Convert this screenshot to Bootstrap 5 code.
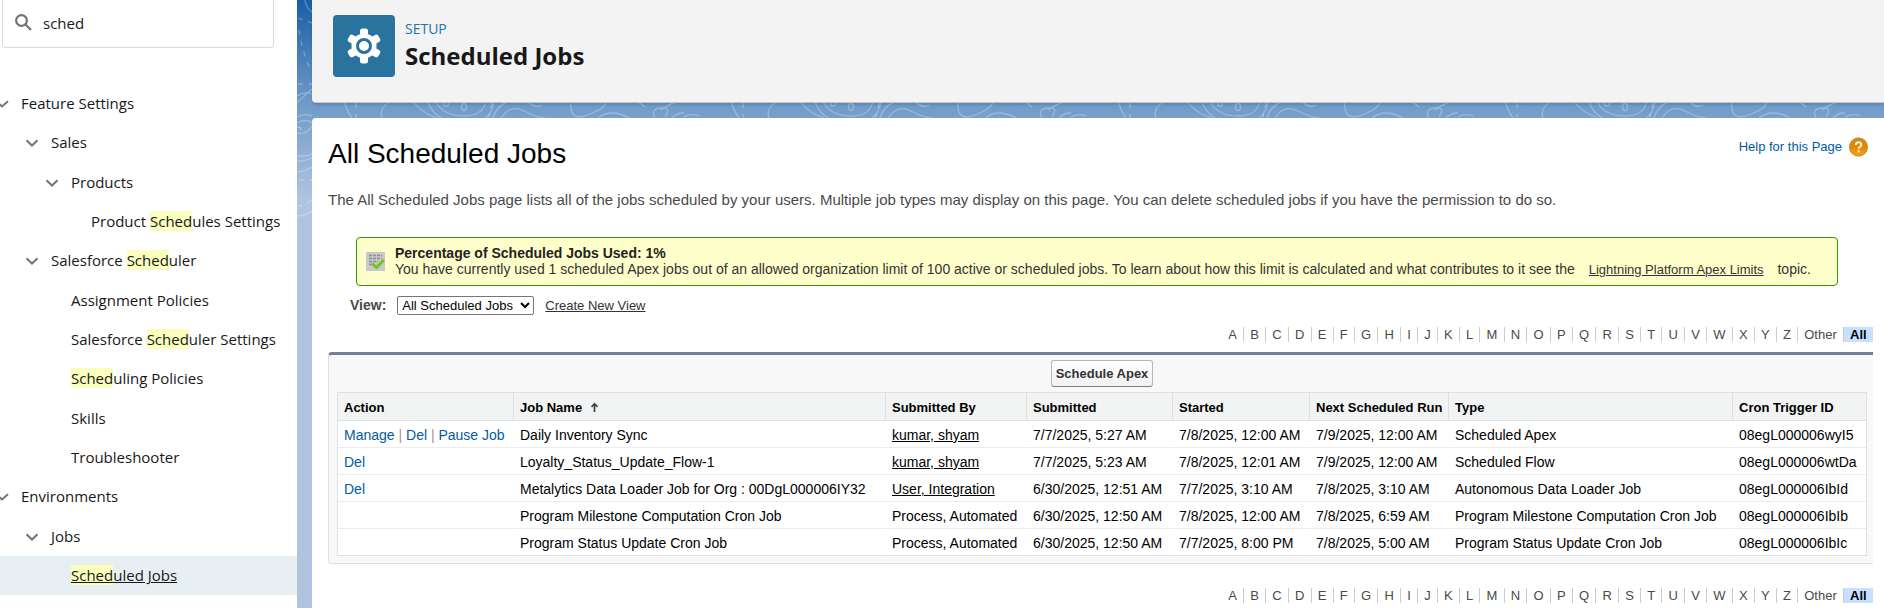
<!DOCTYPE html>
<html lang="en">
<head>
<meta charset="utf-8">
<meta name="viewport" content="width=device-width, initial-scale=1">
<title>Scheduled Jobs | Setup</title>
<link href="https://cdn.jsdelivr.net/npm/bootstrap@5.3.0/dist/css/bootstrap.min.css" rel="stylesheet">
<style>
  body { font-family: "Liberation Sans", Arial, sans-serif; font-size: 14px; color: #000; background: #fff; }
  a { color: #015ba7; text-decoration: none; }
  .plain-link { color: #333; text-decoration: underline; }
  .cell-link { color: #000; text-decoration: underline; }

  /* Setup tree */
  .setup-nav { width: 297px; font-family: "Open Sans", "Segoe UI", sans-serif; font-size: 15px; color: #181818; }
  .quick-find { height: 48px; margin: 0 23px 0 2px; border: 1px solid #dddbda; border-top: 0; border-radius: 0 0 4px 4px; padding: 0 0 2px 12px; gap: 11px; }
  .quick-find input { font-size: 15px; line-height: 20px; color: #181818; outline: 0; }
  .tree { margin-top: 36px; }
  .tree-row { height: 39px; gap: 12px; }
  .tree-row:nth-child(3n) { margin-top: 1px; }
  .tree-row a { color: #181818; white-space: nowrap; }
  .tree-row.current { background: #e8eff3; }
  .tree-row.current a { text-decoration: underline; }
  .tree-row .hit { background: #faffbd; color: inherit; padding: 0; }
  .tree-row svg { width: 14px; height: 8px; flex: none; }
  .lvl-0 { padding-left: 0; }
  .lvl-0 svg { width: 9px; }
  .lvl-1 { padding-left: 25px; }
  .lvl-2 { padding-left: 45px; }
  .lvl-leaf { padding-left: 71px; }
  .lvl-leaf-deep { padding-left: 91px; }

  /* Page backdrop */
  .backdrop {
    padding-left: 15px; gap: 15px; overflow: hidden;
    background:
      url("data:image/svg+xml,%3Csvg xmlns='http://www.w3.org/2000/svg' width='387' height='240' fill='none' stroke='%23fff' stroke-opacity='.28' stroke-width='1.3'%3E%3Cpath d='M8 0q1 8 7 12M0 96q7-5 15-2M0 103q6-6 15-14M0 117q8-4 15-1M0 123q10-5 15 0M0 127q6 0 3 3M0 133q10 2 15-7M0 156q8 1 15-2M0 161q10 0 15-3M0 172q10-1 15-5M0 216q8 0 15-5'/%3E%3Cpath stroke-dasharray='5 6' d='M1 18l14 5M2 30q4 26 13 42M1 84h14M59 103v15M195 103l-3 14M2 180h13M0 206q9 0 15-7'/%3E%3Cpath d='M47 100q2 10 8 18M85 118q-4-12 12-18M115 100q8 12 25 18M139 102q8 14 28 14t22-16M131 102q8 21 35 22t31-22M196 118q4-14 20-18M204 118q9-14 23-7t21 7M230 101q9 8 15 4M274 102q-2 20 17 13t18-15M301 118q13-10 31 0M335 101q7 0 13 6M358 118q-5-9 6-10t4 9M364 110q16-12 31-8M375 118q10-10 22 0'/%3E%3Cellipse cx='167' cy='107' rx='2.5' ry='3.5'/%3E%3Cellipse cx='149' cy='104' rx='2.5' ry='2'/%3E%3C/svg%3E") 0 0 repeat-x,
      linear-gradient(#195fa5 0, #6c98c7 100px, #80a6d0 130px, #b0c4df 200px) #b0c4df;
  }
  .page-head { height: 103px; background: #f3f3f3; border-bottom: 1px solid #c4c6ca; border-radius: 0 0 0 4px; padding: 15px 21px; gap: 10px; box-shadow: 0 2px 2px rgba(0,0,0,.12); font-family: "Open Sans", "Segoe UI", sans-serif; }
  .page-icon { width: 62px; height: 62px; background: #2a739e; border-radius: 4px; flex: none; }
  .eyebrow { font-size: 14px; line-height: 20px; color: #2574a9; margin-top: 4px; }
  .page-title { font-size: 24px; line-height: 32px; font-weight: 700; color: #181818; margin: 1px 0 0; }
  .page-body { background: #fff; border-radius: 4px 0 0 0; padding: 18px 11px 5px 16px; }
  .list-title { font-size: 28px; line-height: 36px; font-weight: 400; margin: 0; }
  .help-link { font-size: 13px; gap: 7px; margin: 1px 5px 0 0; }
  .list-desc { font-size: 15px; line-height: 20px; color: #4a4a4a; margin: 18px 0 27px; }

  /* Usage notice */
  .usage { min-height: 49px; margin: 0 35px 0 28px; padding: 0 8px 0 9px; gap: 10px; background: #ffffcc; border: 1px solid #390; border-radius: 4px; color: #333; line-height: 16px; }
  .usage strong { color: #222; }
  .usage .plain-link { font-size: 13px; margin: 0 10px; }

  .view-row { margin: 10px 0 12px 22px; height: 19px; gap: 11px; color: #4a4a4a; font-size: 13px; }
  .view-row label { font-weight: 700; font-size: 14px; }
  .view-select { width: 137px; height: 19px; font-size: 13px; padding: 0; color: #000; background: #fff; border: 1px solid #767676; border-radius: 2px; }

  .rolodex { width: 651px; font-size: 13px; line-height: 15px; }
  .rolodex li { flex: 1 1 auto; text-align: center; border-left: 1px solid #ccc; }
  .rolodex li:first-child { border-left: 0; }
  .rolodex a { display: block; padding: 0 5px; color: #4a4a4a; }
  .rolodex .on a { background: #c7e0ff; color: #000; font-weight: 700; }

  /* Job list */
  .job-block { margin: 10px 0 24px; padding: 0 6px 7px 8px; background: #f8f8f8; border: 1px solid #dde1e4; border-top: 3px solid #747e96; border-right: 0; border-radius: 4px 0 0 4px; }
  .btn-row { padding: 5px 0; }
  .btn-row button { height: 27px; padding: 0 4px; font-size: 13px; font-weight: 700; line-height: 16px; color: #333; border: 1px solid #b5b5b5; border-bottom-color: #7f7f7f; border-radius: 3px; background: linear-gradient(#fff, #f1f1f1); }
  .jobs { table-layout: fixed; width: 100%; border-collapse: separate; border-spacing: 0; border: 1px solid #dde1e4; border-bottom: 0; background: #fff; white-space: nowrap; }
  .jobs th { height: 28px; padding: 2px 6px 0; font-size: 13px; font-weight: 700; background: #f2f3f3; border-bottom: 1px solid #dde1e4; border-left: 1px solid #dde1e4; line-height: 20px; }
  .jobs td { height: 27px; padding: 2px 6px 0; border-bottom: 1px solid #ececec; border-left: 1px solid transparent; line-height: 20px; }
  .jobs tr:last-child td { border-bottom-color: #dde1e4; }
  .jobs th:first-child, .jobs td:first-child { border-left: 0; }
  .jobs .bar { color: #999; }
  .c-act { width: 175px; } .c-by { width: 141px; } .c-sub { width: 146px; } .c-start { width: 137px; }
  .c-next { width: 139px; } .c-type { width: 284px; } .c-id { width: 134px; }
</style>
</head>
<body>
<svg class="d-none" aria-hidden="true">
  <symbol id="chev" viewBox="0 0 14 8"><path d="M1.5 1.2 7 6.5l5.500-5.300" fill="none" stroke="#747474" stroke-width="2"/></symbol>
  <symbol id="chev-cut" viewBox="0 0 9 8"><path d="M-3.500 1.200 2 6.500l6-5.300" fill="none" stroke="#747474" stroke-width="2"/></symbol>
</svg>
<div class="d-flex min-vh-100">
  <aside class="setup-nav flex-shrink-0">
    <div class="quick-find d-flex align-items-center">
      <svg width="17" height="17" viewBox="0 0 17 17" fill="none" stroke="#747474" stroke-width="2.200" aria-hidden="true"><circle cx="6.500" cy="6.500" r="5.400"/><path d="m10.500 10.500 5.500 5.500"/></svg>
      <input type="text" class="border-0 p-0 w-75 bg-transparent" value="sched" aria-label="Quick Find">
    </div>
    <nav class="tree" aria-label="Setup">
      <div class="tree-row lvl-0 d-flex align-items-center"><svg><use href="#chev-cut"/></svg><a href="#">Feature Settings</a></div>
      <div class="tree-row lvl-1 d-flex align-items-center"><svg><use href="#chev"/></svg><a href="#">Sales</a></div>
      <div class="tree-row lvl-2 d-flex align-items-center"><svg><use href="#chev"/></svg><a href="#">Products</a></div>
      <div class="tree-row lvl-leaf-deep d-flex align-items-center"><a href="#">Product <mark class="hit">Sched</mark>ules Settings</a></div>
      <div class="tree-row lvl-1 d-flex align-items-center"><svg><use href="#chev"/></svg><a href="#">Salesforce <mark class="hit">Sched</mark>uler</a></div>
      <div class="tree-row lvl-leaf d-flex align-items-center"><a href="#">Assignment Policies</a></div>
      <div class="tree-row lvl-leaf d-flex align-items-center"><a href="#">Salesforce <mark class="hit">Sched</mark>uler Settings</a></div>
      <div class="tree-row lvl-leaf d-flex align-items-center"><a href="#"><mark class="hit">Sched</mark>uling Policies</a></div>
      <div class="tree-row lvl-leaf d-flex align-items-center"><a href="#">Skills</a></div>
      <div class="tree-row lvl-leaf d-flex align-items-center"><a href="#">Troubleshooter</a></div>
      <div class="tree-row lvl-0 d-flex align-items-center"><svg><use href="#chev-cut"/></svg><a href="#">Environments</a></div>
      <div class="tree-row lvl-1 d-flex align-items-center"><svg><use href="#chev"/></svg><a href="#">Jobs</a></div>
      <div class="tree-row current lvl-leaf d-flex align-items-center"><a href="#" aria-current="page"><mark class="hit">Sched</mark>uled Jobs</a></div>
    </nav>
  </aside>

  <div class="backdrop d-flex flex-column flex-grow-1">
    <header class="page-head d-flex align-items-start">
      <div class="page-icon d-flex align-items-center justify-content-center">
        <svg width="36" height="36" viewBox="-18 -18 36 36" aria-hidden="true">
          <g fill="#fff"><circle r="12.500"/>
            <g><rect x="-4" y="-17.500" width="8" height="35" rx="2.500"/><rect x="-4" y="-17.500" width="8" height="35" rx="2.500" transform="rotate(60)"/><rect x="-4" y="-17.500" width="8" height="35" rx="2.500" transform="rotate(120)"/></g></g>
          <circle r="6.500" fill="#fff" stroke="#2a739e" stroke-width="3"/>
        </svg>
      </div>
      <div>
        <div class="eyebrow">SETUP</div>
        <h1 class="page-title">Scheduled Jobs</h1>
      </div>
    </header>

    <main class="page-body flex-grow-1">
      <div class="d-flex justify-content-between align-items-start">
        <h2 class="list-title">All Scheduled Jobs</h2>
        <a href="#" class="help-link d-flex align-items-center">Help for this Page
          <svg width="19" height="20" viewBox="0 0 19 20" aria-hidden="true"><defs><linearGradient id="amber" x2="0" y2="1"><stop stop-color="#c98a1c"/><stop offset=".5" stop-color="#e08a08"/><stop offset="1" stop-color="#f6a31d"/></linearGradient></defs><circle cx="9.500" cy="10" r="9.200" fill="url(#amber)" stroke="#b87510" stroke-width=".6"/><path d="M6.800 8q.1-2.800 2.800-2.800T12.300 7.700q0 1.300-1.400 2-1.200.700-1.200 2" fill="none" stroke="#fff3d6" stroke-width="1.900"/><circle cx="9.700" cy="14.200" r="1.200" fill="#fff3d6"/></svg>
        </a>
      </div>
      <p class="list-desc">The All Scheduled Jobs page lists all of the jobs scheduled by your users. Multiple job types may display on this page. You can delete scheduled jobs if you have the permission to do so.</p>

      <div class="usage d-flex align-items-center" role="status">
        <svg class="flex-shrink-0" width="19" height="19" viewBox="0 0 19 19" aria-hidden="true"><path fill="#c9c9c9" d="M0 0h19v19H0z"/><path stroke="#8d8d8d" stroke-width="1.500" stroke-dasharray="3 1" d="M3 3.500h13M3 6.500h13M3 9.500h9M3 12.500h4"/><path d="m6 11.500 4.500 4L18 8" fill="none" stroke="#6fc61c" stroke-width="3"/></svg>
        <div class="flex-grow-1">
          <strong class="d-block">Percentage of Scheduled Jobs Used: 1%</strong>
          You have currently used 1 scheduled Apex jobs out of an allowed organization limit of 100 active or scheduled jobs. To learn about how this limit is calculated and what contributes to it see the <a href="#" class="plain-link">Lightning Platform Apex Limits</a> topic.
        </div>
      </div>

      <form class="view-row d-flex align-items-center">
        <label for="view">View:</label>
        <select id="view" class="view-select"><option>All Scheduled Jobs</option></select>
        <a href="#" class="plain-link">Create New View</a>
      </form>

      <ul class="rolodex list-unstyled d-flex ms-auto mb-0">
        <li><a href="#">A</a></li><li><a href="#">B</a></li><li><a href="#">C</a></li><li><a href="#">D</a></li><li><a href="#">E</a></li><li><a href="#">F</a></li><li><a href="#">G</a></li><li><a href="#">H</a></li><li><a href="#">I</a></li><li><a href="#">J</a></li><li><a href="#">K</a></li><li><a href="#">L</a></li><li><a href="#">M</a></li><li><a href="#">N</a></li><li><a href="#">O</a></li><li><a href="#">P</a></li><li><a href="#">Q</a></li><li><a href="#">R</a></li><li><a href="#">S</a></li><li><a href="#">T</a></li><li><a href="#">U</a></li><li><a href="#">V</a></li><li><a href="#">W</a></li><li><a href="#">X</a></li><li><a href="#">Y</a></li><li><a href="#">Z</a></li><li><a href="#">Other</a></li><li class="on"><a href="#">All</a></li>
      </ul>

      <section class="job-block">
        <div class="btn-row d-flex justify-content-center"><button type="button">Schedule Apex</button></div>
        <table class="jobs">
          <colgroup><col class="c-act"><col><col class="c-by"><col class="c-sub"><col class="c-start"><col class="c-next"><col class="c-type"><col class="c-id"></colgroup>
          <thead>
            <tr><th scope="col">Action</th><th scope="col">Job Name <svg class="ms-1" width="9" height="12" viewBox="0 0 9 12" aria-hidden="true"><path d="M4.500 10V2M1.500 5l3-3.300 3 3.300" fill="none" stroke="#444" stroke-width="1.700"/></svg></th><th scope="col">Submitted By</th><th scope="col">Submitted</th><th scope="col">Started</th><th scope="col">Next Scheduled Run</th><th scope="col">Type</th><th scope="col">Cron Trigger ID</th></tr>
          </thead>
          <tbody>
            <tr><td><a href="#">Manage</a> <span class="bar">|</span> <a href="#">Del</a> <span class="bar">|</span> <a href="#">Pause Job</a></td><td>Daily Inventory Sync</td><td><a href="#" class="cell-link">kumar, shyam</a></td><td>7/7/2025, 5:27 AM</td><td>7/8/2025, 12:00 AM</td><td>7/9/2025, 12:00 AM</td><td>Scheduled Apex</td><td>08egL000006wyI5</td></tr>
            <tr><td><a href="#">Del</a></td><td>Loyalty_Status_Update_Flow-1</td><td><a href="#" class="cell-link">kumar, shyam</a></td><td>7/7/2025, 5:23 AM</td><td>7/8/2025, 12:01 AM</td><td>7/9/2025, 12:00 AM</td><td>Scheduled Flow</td><td>08egL000006wtDa</td></tr>
            <tr><td><a href="#">Del</a></td><td>Metalytics Data Loader Job for Org : 00DgL000006IY32</td><td><a href="#" class="cell-link">User, Integration</a></td><td>6/30/2025, 12:51 AM</td><td>7/7/2025, 3:10 AM</td><td>7/8/2025, 3:10 AM</td><td>Autonomous Data Loader Job</td><td>08egL000006IbId</td></tr>
            <tr><td></td><td>Program Milestone Computation Cron Job</td><td>Process, Automated</td><td>6/30/2025, 12:50 AM</td><td>7/8/2025, 12:00 AM</td><td>7/8/2025, 6:59 AM</td><td>Program Milestone Computation Cron Job</td><td>08egL000006IbIb</td></tr>
            <tr><td></td><td>Program Status Update Cron Job</td><td>Process, Automated</td><td>6/30/2025, 12:50 AM</td><td>7/7/2025, 8:00 PM</td><td>7/8/2025, 5:00 AM</td><td>Program Status Update Cron Job</td><td>08egL000006IbIc</td></tr>
          </tbody>
        </table>
      </section>

      <ul class="rolodex list-unstyled d-flex ms-auto mb-0">
        <li><a href="#">A</a></li><li><a href="#">B</a></li><li><a href="#">C</a></li><li><a href="#">D</a></li><li><a href="#">E</a></li><li><a href="#">F</a></li><li><a href="#">G</a></li><li><a href="#">H</a></li><li><a href="#">I</a></li><li><a href="#">J</a></li><li><a href="#">K</a></li><li><a href="#">L</a></li><li><a href="#">M</a></li><li><a href="#">N</a></li><li><a href="#">O</a></li><li><a href="#">P</a></li><li><a href="#">Q</a></li><li><a href="#">R</a></li><li><a href="#">S</a></li><li><a href="#">T</a></li><li><a href="#">U</a></li><li><a href="#">V</a></li><li><a href="#">W</a></li><li><a href="#">X</a></li><li><a href="#">Y</a></li><li><a href="#">Z</a></li><li><a href="#">Other</a></li><li class="on"><a href="#">All</a></li>
      </ul>
    </main>
  </div>
</div>
<script src="https://cdn.jsdelivr.net/npm/bootstrap@5.3.0/dist/js/bootstrap.bundle.min.js"></script>
</body>
</html>
